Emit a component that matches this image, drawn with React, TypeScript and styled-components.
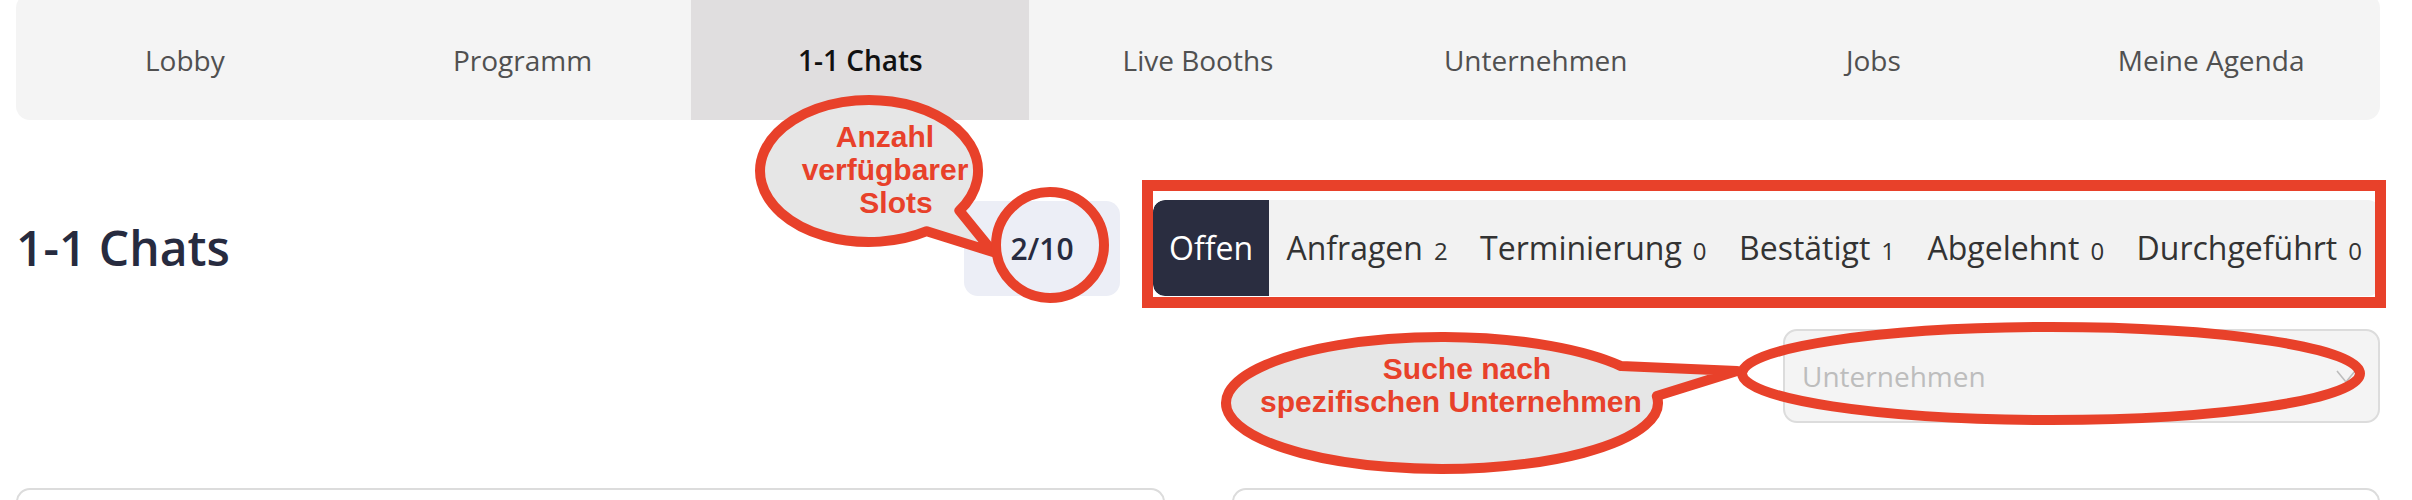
import React from "react";
import styled, { createGlobalStyle } from "styled-components";

const GlobalStyle = createGlobalStyle`
  html, body { margin: 0; padding: 0; background: #ffffff; }
  body { font-family: "Open Sans", "Noto Sans", sans-serif; overflow: hidden; }
  * { box-sizing: border-box; }
`;

const RED = "#e8412a";

const Page = styled.div`
  position: relative;
  width: 2412px;
  height: 500px;
  overflow: hidden;
  padding: 0 32px 0 16px;
`;

const Nav = styled.nav`
  display: grid;
  grid-template-columns: repeat(7, 1fr);
  height: 126px;
  margin-top: -6px;
  background: #f4f4f4;
  border-radius: 14px;
  overflow: hidden;
`;

const NavItem = styled.a<{ $active?: boolean }>`
  display: flex;
  align-items: center;
  justify-content: center;
  padding-top: 6px;
  font-size: 28px;
  text-decoration: none;
  color: ${(p) => (p.$active ? "#111111" : "#505050")};
  font-weight: ${(p) => (p.$active ? 600 : 400)};
  background: ${(p) => (p.$active ? "#e0dedf" : "transparent")};
`;

const Header = styled.div`
  display: flex;
  align-items: center;
  height: 96px;
  margin-top: 80px;
`;

const Title = styled.h1`
  flex: 1;
  margin: 0;
  font-size: 48px;
  font-weight: 600;
  line-height: 1.3;
  color: #272b3f;
`;

const SlotBadge = styled.div`
  width: 156px;
  height: 95px;
  border-radius: 14px;
  background: #eceef6;
  display: flex;
  align-items: center;
  justify-content: center;
  font-size: 30px;
  font-weight: 600;
  color: #272b3f;
`;

const TabBar = styled.div`
  margin-left: 33px;
  width: 1227px;
  height: 96px;
  display: flex;
  justify-content: space-between;
  background: #f2f2f2;
  border-radius: 12px;
  padding-right: 3px;
  overflow: hidden;
`;

const Tab = styled.button<{ $active?: boolean }>`
  display: flex;
  align-items: center;
  border: none;
  margin: 0;
  padding: 0 ${(p) => (p.$active ? "16px 0 16px" : "15px")};
  font-family: inherit;
  font-size: 32px;
  line-height: 1;
  cursor: pointer;
  color: ${(p) => (p.$active ? "#ffffff" : "#333333")};
  background: ${(p) => (p.$active ? "#2a2d40" : "transparent")};
  border-radius: ${(p) => (p.$active ? "12px 0 0 12px" : "0")};
`;

const Count = styled.span`
  font-size: 24px;
  margin-left: 11px;
`;

const FilterRow = styled.div`
  display: flex;
  justify-content: flex-end;
  margin-top: 33px;
`;

const Select = styled.div`
  width: 597px;
  height: 94px;
  border: 2px solid #dcdcdc;
  border-radius: 14px;
  background: #f4f4f4;
  display: flex;
  align-items: center;
  justify-content: space-between;
  padding: 0 22px 0 17px;
  font-size: 28px;
  color: #bdbdbd;
`;

const CardGrid = styled.div`
  display: grid;
  grid-template-columns: 1fr 1fr;
  gap: 67px;
  margin-top: 65px;
`;

const Card = styled.div`
  height: 160px;
  border: 2px solid #dcdcdc;
  border-radius: 14px;
  background: #ffffff;
`;

const Overlay = styled.svg`
  position: absolute;
  left: 0;
  top: 0;
  width: 2412px;
  height: 500px;
  pointer-events: none;
`;

const CalloutText = styled.div<{ $left: number; $top: number; $width: number }>`
  position: absolute;
  left: ${(p) => p.$left}px;
  top: ${(p) => p.$top}px;
  width: ${(p) => p.$width}px;
  font-family: "Liberation Sans", Arial, sans-serif;
  font-weight: 700;
  font-size: 30px;
  line-height: 33px;
  color: ${RED};
  text-align: center;
  pointer-events: none;
`;

const CalloutLine = styled.div<{ $shift?: number }>`
  padding-left: ${(p) => p.$shift ?? 0}px;
  white-space: nowrap;
`;

function bubblePath(
  cx: number,
  cy: number,
  rx: number,
  ry: number,
  a1: number,
  a2: number,
  tx: number,
  ty: number
) {
  const pt = (a: number) => [
    cx + rx * Math.cos((a * Math.PI) / 180),
    cy + ry * Math.sin((a * Math.PI) / 180),
  ];
  const [x1, y1] = pt(a1);
  const [x2, y2] = pt(a2);
  return `M${x1.toFixed(1)} ${y1.toFixed(1)} A${rx} ${ry} 0 1 0 ${x2.toFixed(
    1
  )} ${y2.toFixed(1)} L${tx} ${ty} Z`;
}

const navItems = [
  "Lobby",
  "Programm",
  "1-1 Chats",
  "Live Booths",
  "Unternehmen",
  "Jobs",
  "Meine Agenda",
];

const tabs: { label: string; count?: number }[] = [
  { label: "Offen" },
  { label: "Anfragen", count: 2 },
  { label: "Terminierung", count: 0 },
  { label: "Bestätigt", count: 1 },
  { label: "Abgelehnt", count: 0 },
  { label: "Durchgeführt", count: 0 },
];

export default function App() {
  return (
    <>
      <GlobalStyle />
      <Page>
        <Nav>
          {navItems.map((n) => (
            <NavItem key={n} $active={n === "1-1 Chats"}>
              {n}
            </NavItem>
          ))}
        </Nav>

        <Header>
          <Title>1-1 Chats</Title>
          <SlotBadge>2/10</SlotBadge>
          <TabBar>
            {tabs.map((t, i) => (
              <Tab key={t.label} $active={i === 0}>
                <span>
                  {t.label}
                  {t.count !== undefined && <Count>{t.count}</Count>}
                </span>
              </Tab>
            ))}
          </TabBar>
        </Header>

        <FilterRow>
          <Select>
            <span>Unternehmen</span>
            <svg width="20" height="13" viewBox="0 0 20 13">
              <polyline
                points="1,1 10,12 19,1"
                fill="none"
                stroke="#bdbdbd"
                strokeWidth="1.6"
              />
            </svg>
          </Select>
        </FilterRow>

        <CardGrid>
          <Card />
          <Card />
        </CardGrid>

        <Overlay viewBox="0 0 2412 500">
          <path
            d={bubblePath(869, 171, 109, 71, 34, 58, 993, 252)}
            fill="#e6e6e6"
            stroke={RED}
            strokeWidth={10}
            strokeLinejoin="round"
          />
          <ellipse cx={1050} cy={245} rx={54} ry={53} fill="none" stroke={RED} strokeWidth={10} />
          <rect x={1147.5} y={185.5} width={1233} height={117} fill="none" stroke={RED} strokeWidth={11} />
          <ellipse cx={2051} cy={373.5} rx={309} ry={46.5} fill="none" stroke={RED} strokeWidth={10} />
          <path
            d={bubblePath(1442, 403, 216, 66, -34, -6, 1737, 371)}
            fill="#e6e6e6"
            stroke={RED}
            strokeWidth={10}
            strokeLinejoin="round"
          />
        </Overlay>

        <CalloutText $left={785} $top={120} $width={200}>
          <CalloutLine>Anzahl</CalloutLine>
          <CalloutLine>verfügbarer</CalloutLine>
          <CalloutLine $shift={22}>Slots</CalloutLine>
        </CalloutText>

        <CalloutText $left={1251} $top={352} $width={400}>
          <CalloutLine $shift={32}>Suche nach</CalloutLine>
          <CalloutLine>spezifischen Unternehmen</CalloutLine>
        </CalloutText>
      </Page>
    </>
  );
}
